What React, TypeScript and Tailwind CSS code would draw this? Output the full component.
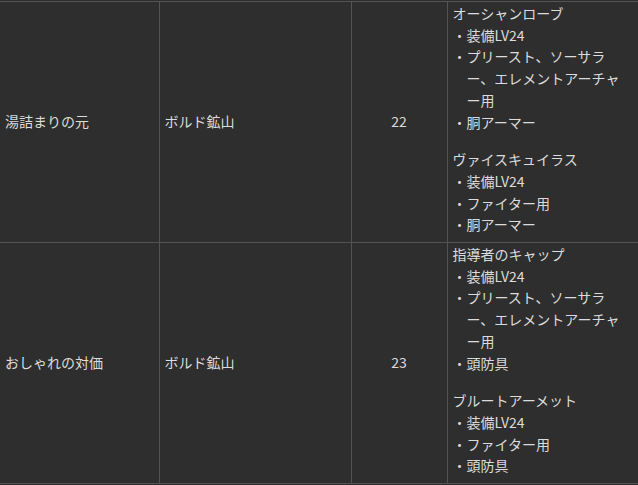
import React from "react";

type Item = { title: string; bullets: string[][] };
type Row = { quest: string; place: string; level: number; items: Item[] };

const rows: Row[] = [
  {
    quest: "湯詰まりの元",
    place: "ボルド鉱山",
    level: 22,
    items: [
      {
        title: "オーシャンローブ",
        bullets: [["装備LV24"], ["プリースト、ソーサラ", "ー、エレメントアーチャ", "ー用"], ["胴アーマー"]],
      },
      {
        title: "ヴァイスキュイラス",
        bullets: [["装備LV24"], ["ファイター用"], ["胴アーマー"]],
      },
    ],
  },
  {
    quest: "おしゃれの対価",
    place: "ボルド鉱山",
    level: 23,
    items: [
      {
        title: "指導者のキャップ",
        bullets: [["装備LV24"], ["プリースト、ソーサラ", "ー、エレメントアーチャ", "ー用"], ["頭防具"]],
      },
      {
        title: "ブルートアーメット",
        bullets: [["装備LV24"], ["ファイター用"], ["頭防具"]],
      },
    ],
  },
];

const App: React.FC = () => {
  return (
    <div
      className="min-h-screen bg-[#2e2e2e] pt-[1px] text-[14px] leading-[21.7px] text-[#dcdcdc]"
      style={{ fontFamily: '"Noto Sans CJK JP", "Noto Sans", sans-serif' }}
    >
      <table className="w-[638px] table-fixed border-collapse">
        <colgroup>
          <col className="w-[159px]" />
          <col className="w-[192px]" />
          <col className="w-[96px]" />
          <col className="w-[191px]" />
        </colgroup>
        <tbody>
          {rows.map((row) => (
            <tr key={row.quest} className="border-y border-[#535353]">
              <td className="border-r border-[#535353] px-[5px] align-middle">{row.quest}</td>
              <td className="border-r border-[#535353] px-[5px] align-middle">{row.place}</td>
              <td className="border-r border-[#535353] px-[5px] text-center align-middle">{row.level}</td>
              <td className="px-[5px] pt-[1px] pb-[6px] align-top">
                {row.items.map((item, i) => (
                  <div key={item.title} className={i > 0 ? "mt-[16px]" : ""}>
                    <div>{item.title}</div>
                    {item.bullets.map((lines, j) => (
                      <div key={j} className="flex">
                        <span className="w-[14px] shrink-0">・</span>
                        <div>
                          {lines.map((l) => (
                            <div key={l} className="whitespace-nowrap">{l}</div>
                          ))}
                        </div>
                      </div>
                    ))}
                  </div>
                ))}
              </td>
            </tr>
          ))}
        </tbody>
      </table>
    </div>
  );
};

export default App;
